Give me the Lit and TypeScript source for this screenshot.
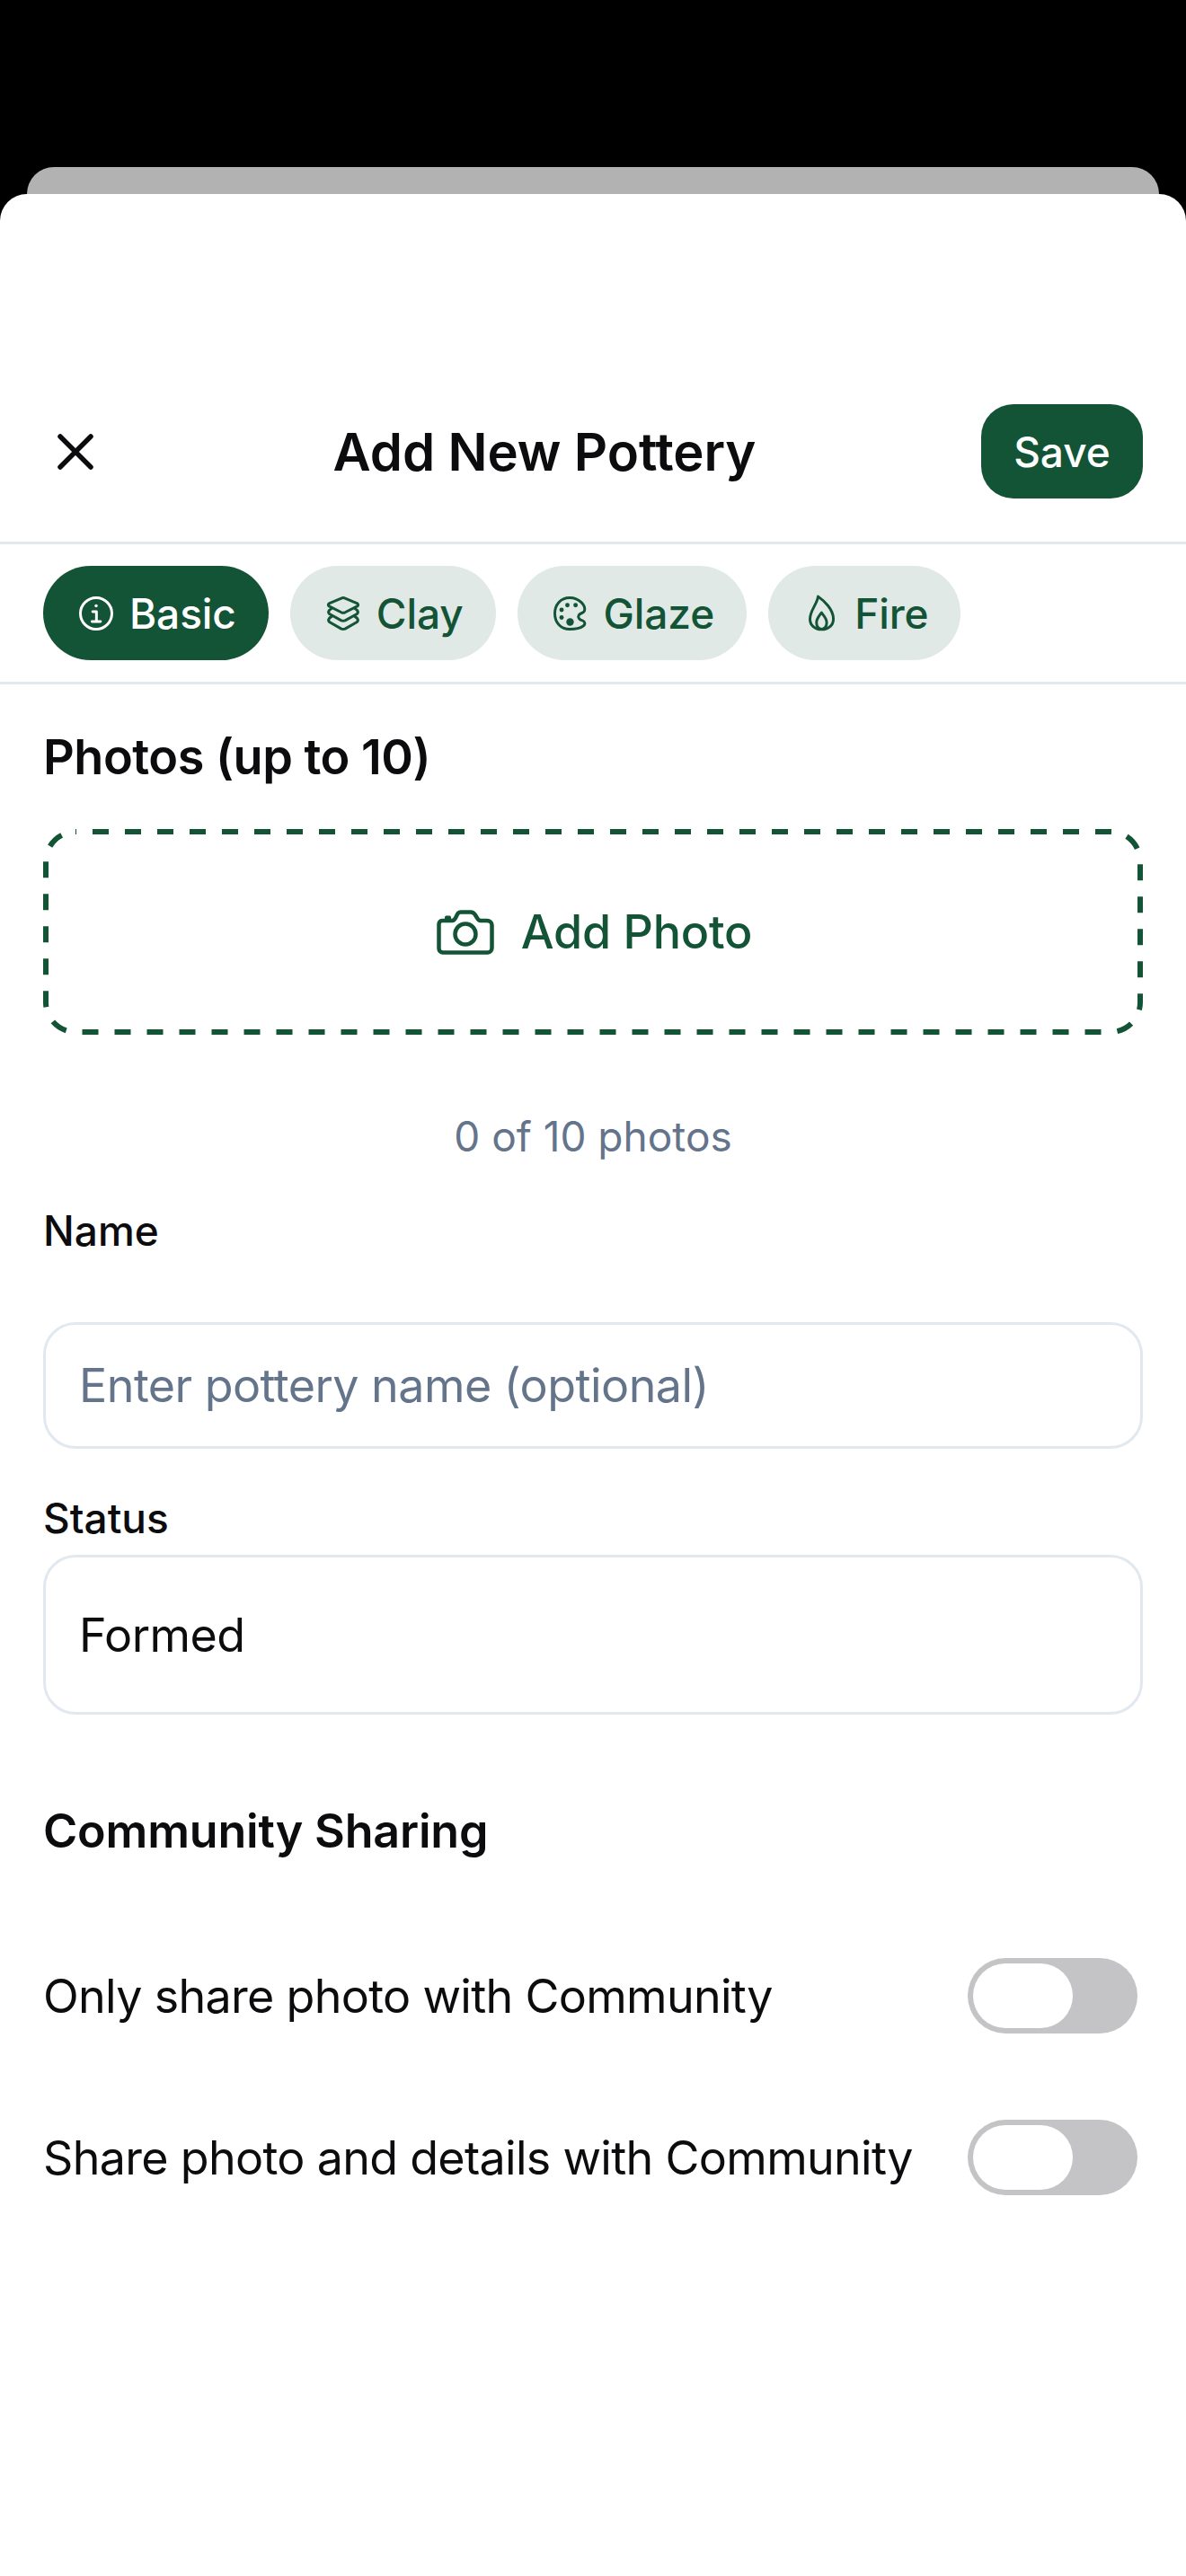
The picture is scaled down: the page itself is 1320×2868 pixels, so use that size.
import { LitElement, html, css, svg } from "lit";
import { customElement } from "lit/decorators.js";

const icons = {
  info: svg`<circle cx="12" cy="12" r="10"/><path d="M9.800 10.800H12.200V17M9.400 17.200H14.800"/><circle cx="12" cy="7.200" r="1" fill="currentColor" stroke="none"/>`,
  clay: svg`<path d="M10.800 2.300Q12 1.800 13.200 2.300L21 5.600Q22 6.500 21 7.400L13.200 11.300Q12 11.800 10.800 11.300L3 7.400Q2 6.500 3 5.600Z"/><path d="M4.800 8.600 3.200 9.900Q2.100 11.200 3.200 12.300L10.800 16.500Q12 16.900 13.200 16.500L20.800 12.300Q21.900 11.200 20.800 9.900L19.200 8.600"/><path d="M4.800 13.700 3.200 15Q2.100 16.300 3.200 17.400L10.800 21.800Q12 22.200 13.200 21.800L20.800 17.400Q21.900 16.300 20.800 15L19.200 13.700"/>`,
  glaze: svg`<path d="M11.500 2C5.500 2 2 6.500 2 12C2 18 6 22 11.500 22C15 22 18 21.500 20 20C21.700 18.800 21.200 17 19.500 16.500C17.500 16 16.500 14.500 17.300 13C18 11.700 20 12 20.800 10.500C22 7 17.500 2 11.500 2Z"/><g fill="currentColor" stroke="none"><circle cx="10" cy="6.700" r="1.400"/><circle cx="15.200" cy="6.700" r="1.400"/><circle cx="6.300" cy="9.700" r="1.400"/><circle cx="6.300" cy="14.600" r="1.400"/><circle cx="11.700" cy="17.400" r="2.400"/></g>`,
  fire: svg`<path d="M10 1.200C9.500 6 4.850 10 4.850 15.500C4.850 19.500 8 22.200 12.200 22.200C16.500 22.200 19.750 19.500 19.750 15.500C19.750 9.500 14 4 10 1.200Z"/><path d="M12.200 11.500C10.800 13.500 9 15.200 9 17.800C9 20.300 10.500 22 12.200 22C14 22 15.500 20.300 15.500 17.800C15.500 15.200 13.600 13.500 12.200 11.500Z"/>`,
};

const tabs: { label: string; icon: keyof typeof icons; active?: boolean }[] = [
  { label: "Basic", icon: "info", active: true },
  { label: "Clay", icon: "clay" },
  { label: "Glaze", icon: "glaze" },
  { label: "Fire", icon: "fire" },
];

@customElement("app-root")
export class AppRoot extends LitElement {
  static styles = css`
    :host { display: block; width: 1320px; height: 2868px; background: #000; font-family: Inter, "Liberation Sans", sans-serif; overflow: hidden; color: #0c0c0e; }
    .back { height: 30px; margin: 186px 30px 0; background: #b2b2b2; border-radius: 30px 30px 0 0; }
    .sheet { height: 2652px; background: #fff; border-radius: 30px 30px 0 0; display: flex; flex-direction: column; box-sizing: border-box; padding-top: 234px; }
    svg { display: block; flex: none; }
    .header { display: flex; align-items: center; justify-content: space-between; padding: 0 48px 48px; border-bottom: 3px solid #e2e8f0; }
    .close { width: 72px; height: 72px; display: flex; align-items: center; justify-content: center; }
    .title { font-size: 58px; line-height: 70px; font-weight: 600; letter-spacing: -0.1px; }
    .save { width: 180px; height: 105px; border-radius: 36px; background: #135436; color: #fff; font-size: 46px; font-weight: 500; display: flex; align-items: center; justify-content: center; }
    .tabs { display: flex; gap: 24px; padding: 24px 48px 24px; border-bottom: 3px solid #e2e8f0; }
    .tab { height: 105px; border-radius: 53px; padding: 0 36px 0 38px; display: flex; align-items: center; gap: 16px; background: #e0e9e5; color: #135436; font-size: 46px; font-weight: 450; letter-spacing: -0.1px; }
    .tab.active { background: #135436; color: #fff; }
    .tab svg { width: 42px; height: 42px; fill: none; stroke: currentColor; stroke-width: 1.700; stroke-linecap: round; stroke-linejoin: round; }
    .body { padding: 51px 48px 0; display: flex; flex-direction: column; }
    .heading { font-size: 54px; line-height: 60px; font-weight: 600; letter-spacing: -0.5px; }
    .add { position: relative; margin-top: 50px; height: 229px; padding-left: 3px; display: flex; align-items: center; justify-content: center; gap: 30px; color: #135436; font-size: 52px; font-weight: 450; letter-spacing: -0.2px; }
    .dash { position: absolute; inset: 0; }
    .count { margin-top: 85px; text-align: center; font-size: 46px; line-height: 56px; color: #64748b; }
    .label { margin-top: 49px; font-size: 46px; line-height: 56px; font-weight: 500; }
    .field { box-sizing: border-box; border: 3px solid #e2e8f0; border-radius: 36px; padding: 0 37px; display: flex; align-items: center; font-size: 52px; letter-spacing: -0.55px; }
    .input { margin-top: 74px; height: 141px; color: #64748b; }
    .select { margin-top: 13px; height: 178px; }
    .section { margin-top: 98px; font-size: 52px; line-height: 64px; font-weight: 600; letter-spacing: -0.2px; }
    .row { display: flex; align-items: center; justify-content: space-between; padding-right: 6px; height: 84px; font-size: 52px; letter-spacing: -0.7px; }
    .row.first { margin-top: 109px; }
    .row.second { margin-top: 96px; }
    .toggle { width: 189px; height: 84px; box-sizing: border-box; padding: 6px; border-radius: 42px; background: #c4c4c7; }
    .knob { width: 111px; height: 72px; border-radius: 36px; background: #fff; }
  `;
  render() {
    return html`
      <div class="back"></div>
      <div class="sheet">
        <div class="header">
          <div class="close">
            <svg width="40" height="40" viewBox="0 0 40 40" fill="none" stroke="#0c0c0e" stroke-width="5.500" stroke-linecap="round"><path d="M3 3 37 37M37 3 3 37"/></svg>
          </div>
          <div class="title">Add New Pottery</div>
          <div class="save">Save</div>
        </div>
        <div class="tabs">
          ${tabs.map(
            (t) => html`<div class="tab ${t.active ? "active" : ""}"><svg viewBox="0 0 24 24">${icons[t.icon]}</svg>${t.label}</div>`
          )}
        </div>
        <div class="body">
          <div class="heading">Photos (up to 10)</div>
          <div class="add">
            <svg class="dash" width="1224" height="229" viewBox="0 0 1224 229" fill="none" stroke="#135436" stroke-width="6" stroke-dasharray="18 18" stroke-dashoffset="17"><rect x="3" y="3" width="1218" height="223" rx="33"/></svg>
            <svg width="64" height="50" viewBox="0 0 64 50" fill="none" stroke="currentColor" stroke-width="4.500" stroke-linejoin="round">
              <path d="M6 12H17C19 12 20 11 21 9L23 5C24 3 25 2.500 27 2.500H38C40 2.500 41 3 42.500 5L45 9C46 11 47 12 49 12H56C59 12 61.500 14 61.500 17V42C61.500 45 59.500 47.500 57 47.500H7C4.500 47.500 2.500 45.500 2.500 43V16C2.500 14 4 12 6 12Z"/>
              <path d="M9 10V8.500C9 7 10 6.500 11 6.500H14C15 6.500 16 7 16 8.500V10Z" fill="currentColor" stroke="none"/>
              <circle cx="32" cy="27" r="11.500"/>
            </svg>
            Add Photo
          </div>
          <div class="count">0 of 10 photos</div>
          <div class="label">Name</div>
          <div class="field input">Enter pottery name (optional)</div>
          <div class="label">Status</div>
          <div class="field select">Formed</div>
          <div class="section">Community Sharing</div>
          <div class="row first">Only share photo with Community<div class="toggle"><div class="knob"></div></div></div>
          <div class="row second">Share photo and details with Community<div class="toggle"><div class="knob"></div></div></div>
        </div>
      </div>
    `;
  }
}
